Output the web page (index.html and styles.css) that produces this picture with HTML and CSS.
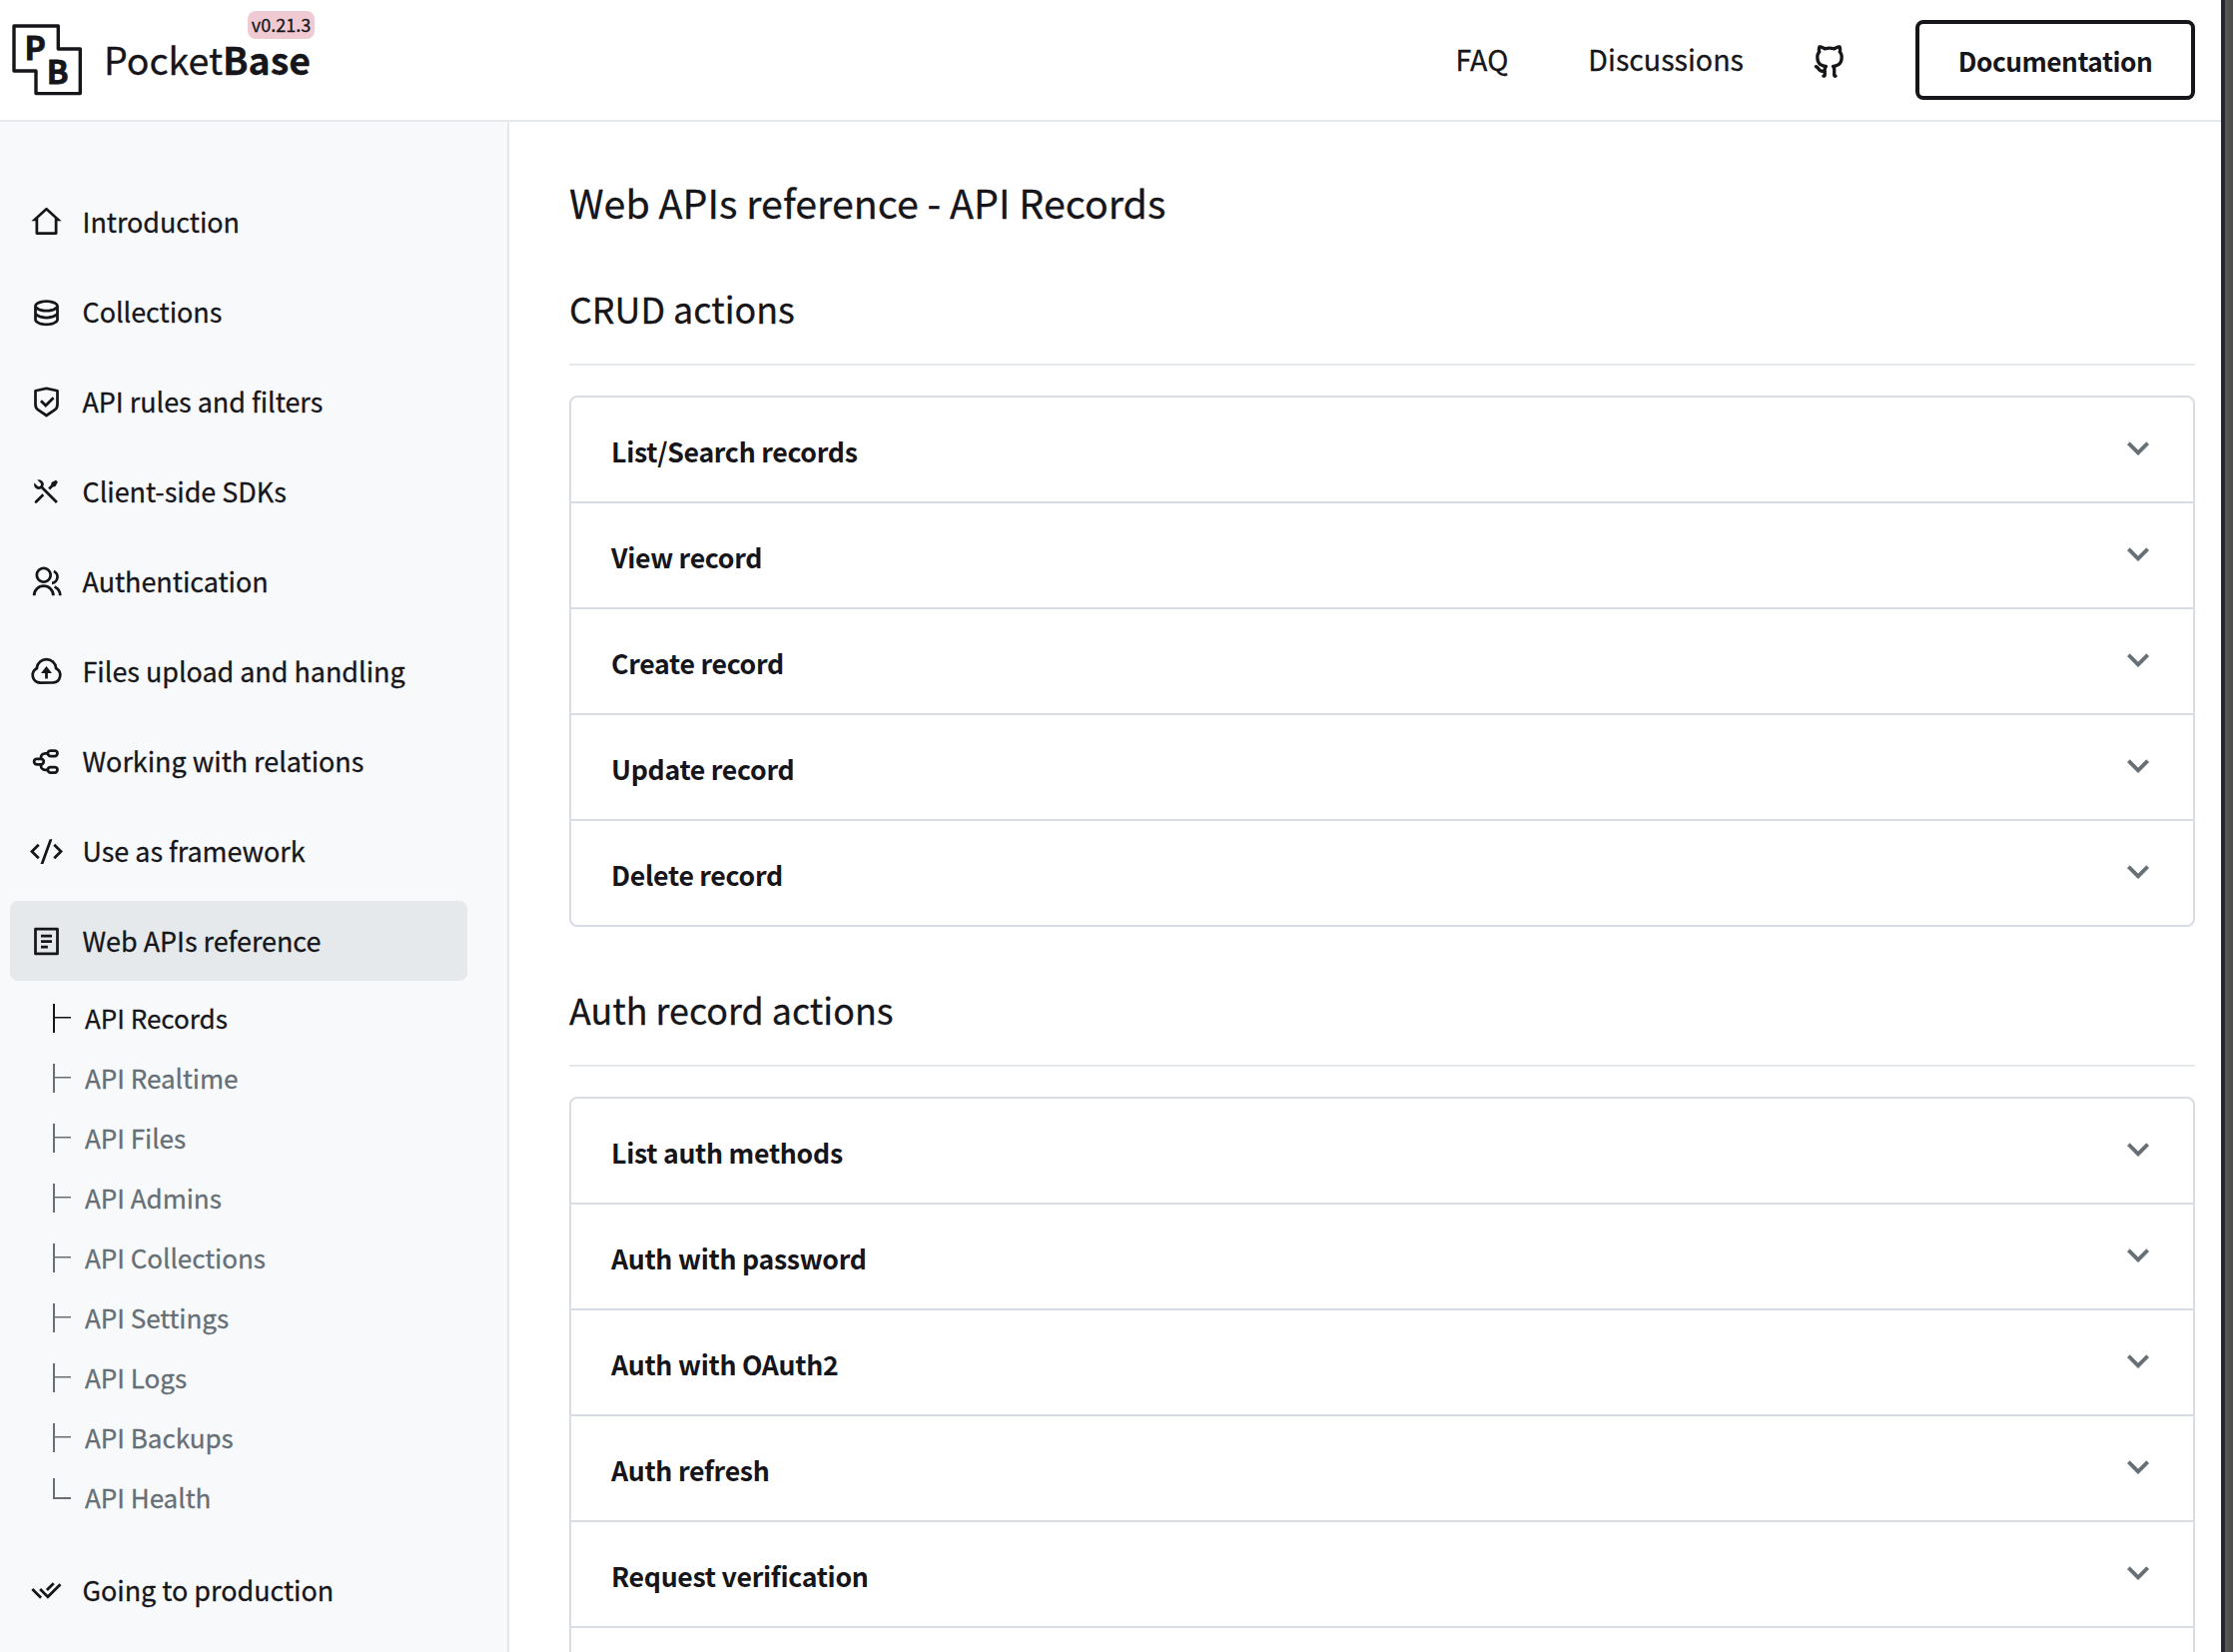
FILE: index.html
```html
<!DOCTYPE html>
<html lang="en">
<head>
<meta charset="utf-8">
<title>Web APIs reference - API Records</title>
<link rel="stylesheet" href="styles.css">
</head>
<body>
<svg class="defs" width="0" height="0" aria-hidden="true">
  <symbol id="chevron" viewBox="0 0 24 24"><path stroke="currentColor" stroke-width=".45" d="M12 13.172l4.95-4.95 1.414 1.414L12 16 5.636 9.636 7.05 8.222z"/></symbol>
</svg>
<div class="page">
  <header class="header">
    <a class="logo">
      <svg class="logo-mark" viewBox="0 0 74 74">
        <path class="logo-outline" d="M4 4H48.3V27H70.3V71.6H26V49H4z"/>
        <text class="logo-letter" x="14.6" y="37.8">P</text>
        <text class="logo-letter" x="36.8" y="61.8">B</text>
      </svg>
      <span class="logo-text">Pocket<strong>Base</strong></span>
      <span class="version">v0.21.3</span>
    </a>
    <nav class="top-nav">
      <a class="top-link">FAQ</a>
      <a class="top-link">Discussions</a>
      <svg class="github" viewBox="0 0 24 24"><path d="M5.883 18.653c-.3-.2-.558-.455-.86-.816a50.32 50.32 0 0 1-.466-.579c-.463-.575-.755-.84-1.057-.949a1 1 0 0 1 .676-1.883c.752.27 1.261.735 1.947 1.588-.094-.117.34.427.433.539.19.227.33.365.44.438.204.137.587.196 1.15.14.023-.382.094-.753.202-1.095C5.38 15.31 3.7 13.396 3.7 9.64c0-1.24.37-2.356 1.058-3.292-.218-.894-.185-1.975.302-3.192a1 1 0 0 1 .63-.582c.081-.024.127-.035.208-.047.803-.123 1.937.17 3.415 1.096A11.731 11.731 0 0 1 12 3.315c.912 0 1.818.104 2.684.308 1.477-.933 2.613-1.226 3.422-1.096.085.013.157.03.218.05a1 1 0 0 1 .616.58c.487 1.216.52 2.297.302 3.19.691.936 1.058 2.045 1.058 3.293 0 3.757-1.674 5.665-4.642 6.392.125.415.19.879.19 1.38a300.492 300.492 0 0 1-.012 2.716 1 1 0 0 1-.019 1.958c-1.139.228-1.983-.532-1.983-1.525l.002-.446.005-.705c.005-.708.007-1.338.007-1.998 0-.697-.183-1.152-.425-1.36-.661-.57-.326-1.655.54-1.752 2.967-.333 4.337-1.482 4.337-4.66 0-.955-.312-1.744-.913-2.404a1 1 0 0 1-.19-1.045c.166-.414.237-.957.096-1.614l-.01.003c-.491.139-1.11.44-1.858.949a1 1 0 0 1-.833.135A9.626 9.626 0 0 0 12 5.315c-.89 0-1.772.119-2.592.35a1 1 0 0 1-.83-.134c-.752-.507-1.374-.807-1.868-.947-.144.653-.073 1.194.092 1.607a1 1 0 0 1-.189 1.045C6.016 7.89 5.7 8.694 5.7 9.64c0 3.172 1.371 4.328 4.322 4.66.865.097 1.201 1.177.544 1.748-.192.168-.429.732-.429 1.364v3.15c0 .986-.835 1.725-1.96 1.528a1 1 0 0 1-.04-1.962v-.99c-.91.061-1.662-.088-2.254-.485z"/></svg>
      <a class="button"><span>Documentation</span></a>
    </nav>
  </header>
  <div class="body">
    <aside class="sidebar">
      <a class="item"><svg class="icon" viewBox="0 0 24 24"><path d="M19 21H5a1 1 0 0 1-1-1v-9H1l10.327-9.388a1 1 0 0 1 1.346 0L23 11h-3v9a1 1 0 0 1-1 1zM6 19h12V9.157l-6-5.454-6 5.454V19z"/></svg><span>Introduction</span></a>
      <a class="item"><svg class="icon" viewBox="0 0 24 24"><path d="M5 12.5c0 .313.461.858 1.53 1.393C7.914 14.585 9.877 15 12 15c2.123 0 4.086-.415 5.47-1.107 1.069-.535 1.53-1.08 1.53-1.393v-2.171C17.35 11.349 14.827 12 12 12s-5.35-.652-7-1.671V12.5zm14 2.829C17.35 16.349 14.827 17 12 17s-5.35-.652-7-1.671V17.5c0 .313.461.858 1.53 1.393C7.914 19.585 9.877 20 12 20c2.123 0 4.086-.415 5.47-1.107 1.069-.535 1.53-1.08 1.53-1.393v-2.171zM3 17.5v-10C3 5.015 7.03 3 12 3s9 2.015 9 4.5v10c0 2.485-4.03 4.5-9 4.5s-9-2.015-9-4.5zm9-7.5c2.123 0 4.086-.415 5.47-1.107C18.539 8.358 19 7.813 19 7.5c0-.313-.461-.858-1.53-1.393C16.086 5.415 14.123 5 12 5c-2.123 0-4.086.415-5.47 1.107C5.461 6.642 5 7.187 5 7.5c0 .313.461.858 1.53 1.393C7.914 9.585 9.877 10 12 10z"/></svg><span>Collections</span></a>
      <a class="item"><svg class="icon" viewBox="0 0 24 24"><path d="M12 1l8.217 1.826a1 1 0 0 1 .783.976v9.987a6 6 0 0 1-2.672 4.992L12 23l-6.328-4.219A6 6 0 0 1 3 13.79V3.802a1 1 0 0 1 .783-.976L12 1zm0 2.049L5 4.604v9.185a4 4 0 0 0 1.781 3.328L12 20.597l5.219-3.48A4 4 0 0 0 19 13.79V4.604L12 3.05zm4.452 5.173l1.415 1.414L11.503 16 7.26 11.757l1.414-1.414 2.828 2.828 4.95-4.95z"/></svg><span>API rules and filters</span></a>
      <a class="item"><svg class="icon" viewBox="0 0 24 24"><path d="M5.33 3.271a3.5 3.5 0 0 1 4.254 4.963l10.709 10.71-1.414 1.414-10.71-10.71a3.502 3.502 0 0 1-4.962-4.255L5.444 7.63a1.5 1.5 0 1 0 2.121-2.121L5.329 3.27zm10.367 1.884l3.182-1.768 1.414 1.414-1.768 3.182-1.768.354-2.12 2.121-1.415-1.414 2.121-2.121.354-1.768zm-6.718 8.132l1.414 1.414-5.303 5.303a1 1 0 0 1-1.492-1.327l.078-.087 5.303-5.303z"/></svg><span>Client-side SDKs</span></a>
      <a class="item"><svg class="icon" viewBox="0 0 24 24"><path d="M2 22a8 8 0 1 1 16 0h-2a6 6 0 1 0-12 0H2zm8-9c-3.315 0-6-2.685-6-6s2.685-6 6-6 6 2.685 6 6-2.685 6-6 6zm0-2c2.21 0 4-1.79 4-4s-1.79-4-4-4-4 1.79-4 4 1.79 4 4 4zm8.284 3.703A8.002 8.002 0 0 1 23 22h-2a6.001 6.001 0 0 0-3.537-5.473l.82-1.824zm-.688-11.29A5.5 5.5 0 0 1 21 8.5a5.499 5.499 0 0 1-5 5.478v-2.013a3.5 3.5 0 0 0 1.041-6.609l.555-1.943z"/></svg><span>Authentication</span></a>
      <a class="item"><svg class="icon" viewBox="0 0 24 24"><path d="M1 14.5a6.496 6.496 0 0 1 3.064-5.519 8.001 8.001 0 0 1 15.872 0 6.5 6.5 0 0 1-2.936 12L7 21c-3.356-.274-6-3.078-6-6.5zm15.848 4.487a4.5 4.5 0 0 0 2.03-8.309l-.807-.503-.12-.942a6.001 6.001 0 0 0-11.903 0l-.12.942-.805.503a4.5 4.5 0 0 0 2.029 8.309l.173.013h9.35l.173-.013zM13 13v4h-2v-4H8l4-5 4 5h-3z"/></svg><span>Files upload and handling</span></a>
      <a class="item"><svg class="icon icon-stroke" viewBox="0 0 24 24"><rect x="13" y="4" width="7" height="4" rx="2"/><rect x="3" y="10" width="7" height="4" rx="2"/><rect x="13" y="16" width="7" height="4" rx="2"/><path d="M13 6h-2a3 3 0 0 0-3 3v1M13 18h-2a3 3 0 0 1-3-3v-1"/></svg><span>Working with relations</span></a>
      <a class="item"><svg class="icon" viewBox="0 0 24 24"><path d="M24 12l-5.657 5.657-1.414-1.414L21.172 12l-4.243-4.243 1.414-1.414L24 12zM2.828 12l4.243 4.243-1.414 1.414L0 12l5.657-5.657L7.07 7.757 2.828 12zm6.96 9H7.66l6.552-18h2.128L9.788 21z"/></svg><span>Use as framework</span></a>
      <a class="item active"><svg class="icon" viewBox="0 0 24 24"><path d="M20 22H4a1 1 0 0 1-1-1V3a1 1 0 0 1 1-1h16a1 1 0 0 1 1 1v18a1 1 0 0 1-1 1zm-1-2V4H5v16h14zM8 7h8v2H8V7zm0 4h8v2H8v-2zm0 4h5v2H8v-2z"/></svg><span>Web APIs reference</span></a>
      <div class="sub">
        <a class="sub-item current">API Records</a>
        <a class="sub-item">API Realtime</a>
        <a class="sub-item">API Files</a>
        <a class="sub-item">API Admins</a>
        <a class="sub-item">API Collections</a>
        <a class="sub-item">API Settings</a>
        <a class="sub-item">API Logs</a>
        <a class="sub-item">API Backups</a>
        <a class="sub-item">API Health</a>
      </div>
      <a class="item"><svg class="icon" viewBox="0 0 24 24"><path d="M11.602 13.76l1.412 1.412 8.466-8.466 1.414 1.414-9.88 9.88-6.364-6.364 1.414-1.414 2.125 2.125 1.413 1.412zm.002-2.828l4.952-4.953 1.41 1.41-4.952 4.953-1.41-1.41zm-2.827 5.655L7.364 18 1 11.636l1.414-1.414 1.413 1.413-.001.001 4.951 4.951z"/></svg><span>Going to production</span></a>
    </aside>
    <main class="content">
      <h1>Web APIs reference - API Records</h1>
      <h2>CRUD actions</h2>
      <div class="accordions">
        <div class="row"><span>List/Search records</span><svg class="chevron"><use href="#chevron"/></svg></div>
        <div class="row"><span>View record</span><svg class="chevron"><use href="#chevron"/></svg></div>
        <div class="row"><span>Create record</span><svg class="chevron"><use href="#chevron"/></svg></div>
        <div class="row"><span>Update record</span><svg class="chevron"><use href="#chevron"/></svg></div>
        <div class="row"><span>Delete record</span><svg class="chevron"><use href="#chevron"/></svg></div>
      </div>
      <h2>Auth record actions</h2>
      <div class="accordions">
        <div class="row"><span>List auth methods</span><svg class="chevron"><use href="#chevron"/></svg></div>
        <div class="row"><span>Auth with password</span><svg class="chevron"><use href="#chevron"/></svg></div>
        <div class="row"><span>Auth with OAuth2</span><svg class="chevron"><use href="#chevron"/></svg></div>
        <div class="row"><span>Auth refresh</span><svg class="chevron"><use href="#chevron"/></svg></div>
        <div class="row"><span>Request verification</span><svg class="chevron"><use href="#chevron"/></svg></div>
        <div class="row"></div>
      </div>
    </main>
  </div>
</div>
<div class="edge"></div>
</body>
</html>
```
FILE: styles.css
```css
* { box-sizing: border-box; }
body {
  margin: 0;
  height: 1654px;
  display: flex;
  overflow: hidden;
  background: #fff;
  color: #16161a;
  font-family: "Noto Sans CJK SC", "Noto Sans", sans-serif;
  font-size: 27px;
  line-height: 40px;
  -webkit-text-stroke: .3px currentColor;
}
.defs { position: absolute; }
svg { fill: currentColor; flex: none; }
.page { flex: 1; display: flex; flex-direction: column; height: 1654px; overflow: hidden; }
.edge {
  width: 12px;
  border-left: 4px solid #26262f;
  background: linear-gradient(90deg, #5a5a5c, #4a4a4a);
}

.header {
  flex: none;
  height: 122px;
  padding: 0 26px 0 10px;
  border-bottom: 2px solid #e5e9ec;
  display: flex;
  align-items: center;
  justify-content: space-between;
}
.logo { position: relative; display: flex; align-items: center; margin-top: -2px; }
.logo-mark { width: 74px; height: 74px; }
.logo-outline { fill: none; stroke: currentColor; stroke-width: 3.4; stroke-linejoin: round; }
.logo-letter { font-size: 32px; font-weight: 700; stroke: currentColor; stroke-width: .8; }
.logo-text { margin-left: 20px; font-size: 37.5px; line-height: 44px; }
.version {
  position: absolute;
  left: 238px;
  top: -11px;
  width: 67px;
  height: 28px;
  border-radius: 8px;
  background: #f0cad2;
  font-size: 18px;
  line-height: 27px;
  text-align: center;
}
.top-nav { display: flex; align-items: center; }
.top-link { margin-right: 80px; font-size: 28.6px; padding-bottom: 3px; }
.github { width: 40px; height: 40px; margin: 2px 66px 0 -14px; }
.button {
  width: 280px;
  height: 80px;
  border: 4px solid #16161a;
  border-radius: 8px;
  display: flex;
  align-items: center;
  justify-content: center;
  font-size: 26.2px;
  font-weight: 700;
  letter-spacing: -.45px;
  -webkit-text-stroke: 0;
}
.button span { padding-top: 1px; }

.body { flex: 1; display: flex; min-height: 0; }
.sidebar {
  width: 510px;
  flex: none;
  padding: 60px 40px 0 10px;
  border-right: 2px solid #e5e9ec;
  background: #f8f9fb;
  display: flex;
  flex-direction: column;
  gap: 10px;
}
.item {
  flex: none;
  height: 80px;
  padding-left: 20px;
  border-radius: 8px;
  display: flex;
  align-items: center;
  gap: 19.5px;
  font-size: 26.9px;
}
.active { background: #e5e9ec; }
.icon { width: 33px; height: 33px; }
.icon-stroke { fill: none; stroke: currentColor; stroke-width: 2; }
.sub { flex: none; margin: -2px 0 12px; padding-left: 43px; font-size: 26px; }
.sub-item {
  height: 60px;
  display: flex;
  align-items: center;
  gap: 15px;
  padding-bottom: 3px;
  color: #666f75;
}
.sub-item::before {
  content: "";
  width: 16px;
  height: 29px;
  margin: 0 -1px -1px 0;
  border-left: 2px solid currentColor;
  background: linear-gradient(currentColor, currentColor) 0 50% / 100% 1.5px no-repeat;
}
.sub-item:last-child::before {
  height: 19px;
  margin-bottom: 16px;
  border-left-width: 2.5px;
  border-bottom: 2px solid currentColor;
  background: none;
}
.sub-item.current { color: #16161a; }

.content { flex: 1; padding: 50px 26px 0 60px; }
h1 { margin: 0 0 -6px; font-size: 39.4px; line-height: 60px; font-weight: 400; }
h2 {
  margin: 50px 0 30px;
  height: 90px;
  padding-top: 5px;
  border-bottom: 2px solid #e5e9ec;
  font-size: 35.85px;
  line-height: 54px;
  font-weight: 400;
}
.accordions { border: 2px solid #d7dde3; border-radius: 8px; }
.row {
  height: 106px;
  padding: 0 35px 0 40px;
  border-bottom: 2px solid #d7dde3;
  display: flex;
  align-items: center;
  justify-content: space-between;
  font-size: 26.7px;
  font-weight: 700;
  letter-spacing: -.3px;
  -webkit-text-stroke: 0;
}
.row span { padding-top: 4px; }
.row:last-child { height: 104px; border-bottom: 0; }
.chevron { width: 40px; height: 40px; color: #666f75; margin-bottom: 2px; }
```
